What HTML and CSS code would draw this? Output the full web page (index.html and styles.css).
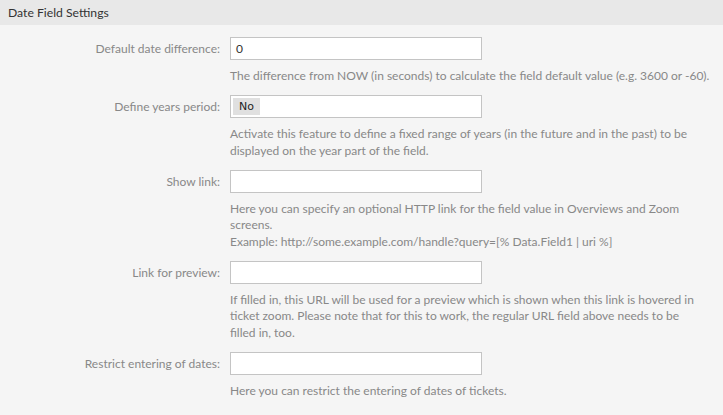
FILE: index.html
```html
<!DOCTYPE html>
<html>
<head>
<meta charset="utf-8">
<link rel="stylesheet" href="styles.css">
</head>
<body>
<div class="widget">
  <div class="header"><h2>Date Field Settings</h2></div>
  <div class="content">
    <div class="row">
      <label class="label">Default date difference:</label>
      <div class="field">
        <div class="input"><span class="val">0</span></div>
        <p class="help">The difference from NOW (in seconds) to calculate the field default value (e.g. 3600 or -60).</p>
      </div>
    </div>
    <div class="row">
      <label class="label">Define years period:</label>
      <div class="field">
        <div class="input"><span class="chip">No</span></div>
        <p class="help">Activate this feature to define a fixed range of years (in the future and in the past) to be displayed on the year part of the field.</p>
      </div>
    </div>
    <div class="row">
      <label class="label">Show link:</label>
      <div class="field">
        <div class="input"></div>
        <p class="help">Here you can specify an optional HTTP link for the field value in Overviews and Zoom screens.<br>Example: http://some.example.com/handle?query=[% Data.Field1 | uri %]</p>
      </div>
    </div>
    <div class="row">
      <label class="label">Link for preview:</label>
      <div class="field">
        <div class="input"></div>
        <p class="help">If filled in, this URL will be used for a preview which is shown when this link is hovered in ticket zoom. Please note that for this to work, the regular URL field above needs to be<br>filled in, too.</p>
      </div>
    </div>
    <div class="row">
      <label class="label">Restrict entering of dates:</label>
      <div class="field">
        <div class="input"></div>
        <p class="help">Here you can restrict the entering of dates of tickets.</p>
      </div>
    </div>
  </div>
</div>
</body>
</html>
```
FILE: styles.css
```css
html, body {
  margin: 0;
  padding: 0;
  background: #f5f5f5;
  font-family: Lato, "Liberation Sans", sans-serif;
  font-size: 12px;
}
.widget {
  width: 723px;
}
.header {
  background: #e8e8e8;
  height: 25px;
  display: flex;
  align-items: center;
  padding-left: 8px;
}
.header h2 {
  margin: 0;
  font-size: 12.2px;
  font-weight: normal;
  color: #333;
}
.content {
  padding-top: 12px;
}
.row {
  display: flex;
  margin-bottom: 10.5px;
}
.label {
  width: 220px;
  text-align: right;
  color: #888;
  height: 23px;
  line-height: 23px;
  flex-shrink: 0;
}
.field {
  margin-left: 10px;
  width: 486px;
}
.input {
  box-sizing: border-box;
  width: 252px;
  height: 23px;
  background: #fff;
  border: 1px solid #c4c4c4;
  display: flex;
  align-items: center;
  padding: 0 5px;
  color: #333;
}
.val {
  font-size: 12px;
}
.chip {
  background: #e0e0e0;
  color: #222;
  font-family: "DejaVu Sans", sans-serif;
  font-size: 11px;
  padding: 2px 6px;
  margin-left: -3px;
}
.help {
  margin: 8px 0 0 0;
  color: #888;
  line-height: 16.5px;
}
```
